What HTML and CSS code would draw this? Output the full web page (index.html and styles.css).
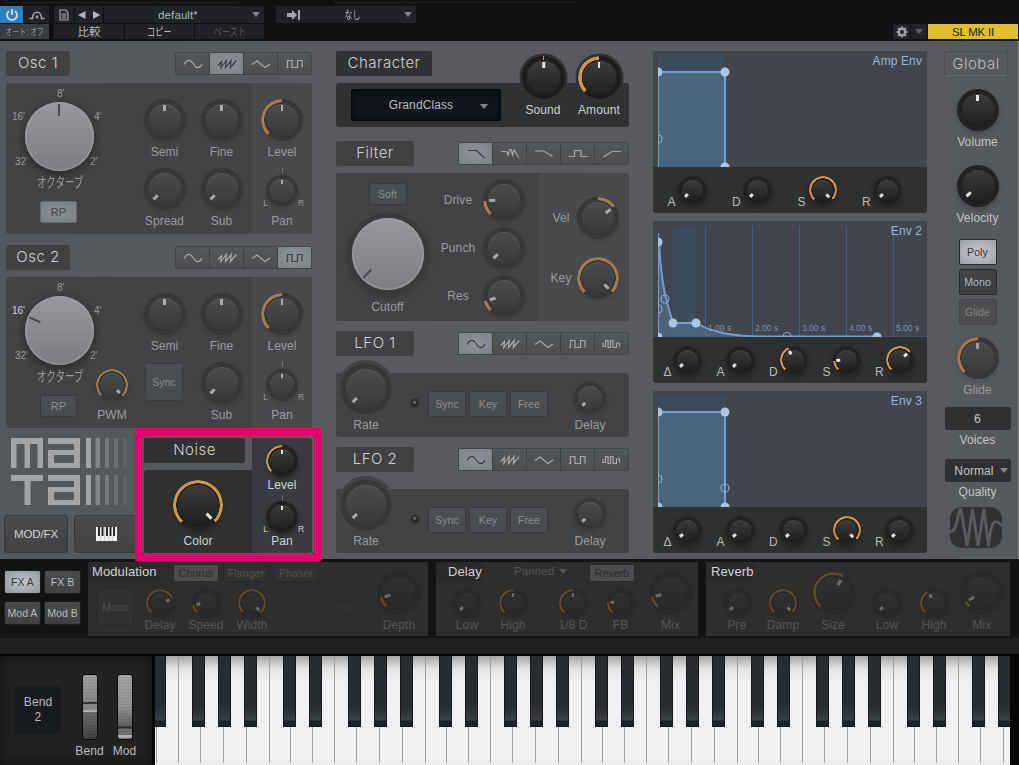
FILE: index.html
```html
<!DOCTYPE html>
<html lang="ja">
<head>
    <meta charset="UTF-8">
    <meta name="viewport" content="width=device-width, initial-scale=1.0">
    <title>Mai Tai</title>
    <link rel="stylesheet" href="styles.css">
</head>
<body>
    <svg class="symbols" aria-hidden="true">
        <symbol id="sine" viewBox="0 0 20 12"><path d="M1 6.5C3.5 2 7 .5 10 5.5S16.500 11.500 19 6"/></symbol>
        <symbol id="saw" viewBox="0 0 20 12"><path d="M.8 7.500 4.500 3.500 3.800 9.500 9.300 2.500 8.500 9.500 14.200 2.500 13.300 9.500 19.300 2.500"/></symbol>
        <symbol id="tri" viewBox="0 0 20 12"><path d="M1 6.500 6 3 14 9.500 19 6"/></symbol>
        <symbol id="square" viewBox="0 0 20 12"><path d="M1 9.500H2.500V2.500H7V9.500H12.500V2.500H17V9.500"/></symbol>
        <symbol id="pulse" viewBox="0 0 20 12"><path d="M1 5V8.500H3.500V2.500H6V9.500H8.500V2.500H11V9.500H14.500V5H17.500V8.500"/></symbol>
        <symbol id="lp24" viewBox="0 0 20 12"><path d="M2 2.500H10.500L18.500 10"/></symbol>
        <symbol id="ladder" viewBox="0 0 20 12"><path d="M1 3.500H6.500L8 7 9.500 1.500H11L12.500 7 14 2 19 10"/></symbol>
        <symbol id="lp12" viewBox="0 0 20 12"><path d="M1 3H9.500L18.500 8.500"/></symbol>
        <symbol id="bp" viewBox="0 0 20 12"><path d="M.5 8.500H6.500V2.500H13V8.500H19.500"/></symbol>
        <symbol id="hp" viewBox="0 0 20 12"><path d="M1.500 9 10 3.500H19"/></symbol>
    </svg>

    <header class="topbar">
        <div class="tabline"><i></i><i></i><i></i><i></i><i></i><i></i><i></i></div>
        <div class="topbar-row">
            <div class="host">
                <button class="hb power" aria-label="Power"><svg width="14" height="14" viewBox="0 0 14 14"><path d="M4 3A5 5 0 1 0 10 3M7 1V7"/></svg></button>
                <button class="hb auto" aria-label="Automation"><svg width="16" height="10" viewBox="0 0 16 10"><path d="M.5 8.500H3.500C3.500 0 12.500 0 12.500 8.500H15.500"/><circle cx="8" cy="7" r="1.400"/></svg></button>
                <div class="hb auto-state"><span class="narrow">オート: オフ</span></div>
            </div>
            <div class="preset">
                <button class="hb" aria-label="File"><svg width="10" height="12" viewBox="0 0 10 12"><path d="M1 1H6.500L9 3.500V11H1ZM2.500 5H7.500M2.500 7H7.500M2.500 9H7.500"/></svg></button>
                <div class="hb arrows"><svg width="23" height="8" viewBox="0 0 23 8"><path d="M7.500 0V8L0 4ZM15 0V8L22.500 4Z"/></svg></div>
                <div class="hb preset-name"><span>default*</span><i class="caret"></i></div>
                <button class="hb"><span>比較</span></button>
                <button class="hb"><span class="narrow">コピー</span></button>
                <button class="hb muted"><span class="narrow">ペースト</span></button>
            </div>
            <div class="hb sidechain"><svg width="14" height="10" viewBox="0 0 14 10"><path d="M0 3H5V0L10 5 5 10V7H0ZM11 0H13V10H11Z"/></svg><span class="narrow">なし</span><i class="caret"></i></div>
            <div class="device">
                <button class="hb" aria-label="Settings"><svg width="12" height="12" viewBox="-6 -6 12 12"><circle r="3.100"/><path d="M0-5.500V-3.500M0 5.500V3.500M-5.500 0H-3.500M5.500 0H3.500M-3.900-3.900-2.600-2.600M3.900-3.900 2.600-2.600M-3.900 3.900-2.600 2.600M3.900 3.900 2.600 2.600"/></svg></button>
                <button class="hb" aria-label="Menu"><i class="caret"></i></button>
                <div class="device-name">SL MK II</div>
            </div>
        </div>
    </header>

    <main class="synth">
        <div class="col col-osc">
            <section>
                <div class="head">
                    <h2 class="title osc-title">Osc 1</h2>
                    <div class="waves">
                        <button><svg><use href="#sine"/></svg></button>
                        <button class="on"><svg><use href="#saw"/></svg></button>
                        <button><svg><use href="#tri"/></svg></button>
                        <button><svg><use href="#square"/></svg></button>
                    </div>
                </div>
                <div class="panel osc">
                    <div class="octave">
                        <span class="feet f8">8'</span>
                        <div class="feet-col"><span class="feet">16'</span><span class="feet">32'</span></div>
                        <span class="knob light oct plain" style="--v:.5"></span>
                        <div class="feet-col"><span class="feet">4'</span><span class="feet">2'</span></div>
                        <span class="oct-label"><span>オクターブ</span></span>
                        <button class="btn rp on">RP</button>
                    </div>
                    <div class="knobs">
                        <div class="cell"><span class="knob plain" style="--v:.5"></span><label>Semi</label></div>
                        <div class="cell"><span class="knob plain" style="--v:.5"></span><label>Fine</label></div>
                        <div class="cell"><span class="knob" style="--v:0"></span><label>Spread</label></div>
                        <div class="cell"><span class="knob" style="--v:0"></span><label>Sub</label></div>
                    </div>
                    <div class="level">
                        <div class="cell"><span class="knob" style="--v:.5"></span><label>Level</label></div>
                        <div class="pan"><i></i><span>L</span><span class="knob sm plain" style="--v:.5"></span><span>R</span><label>Pan</label></div>
                    </div>
                </div>
            </section>

            <section class="osc2">
                <div class="head">
                    <h2 class="title osc-title">Osc 2</h2>
                    <div class="waves">
                        <button><svg><use href="#sine"/></svg></button>
                        <button><svg><use href="#saw"/></svg></button>
                        <button><svg><use href="#tri"/></svg></button>
                        <button class="on"><svg><use href="#square"/></svg></button>
                    </div>
                </div>
                <div class="panel osc">
                    <div class="octave">
                        <span class="feet f8">8'</span>
                        <div class="feet-col"><span class="feet sel">16'</span><span class="feet">32'</span></div>
                        <span class="knob light oct plain" style="--v:.255"></span>
                        <div class="feet-col"><span class="feet">4'</span><span class="feet">2'</span></div>
                        <span class="oct-label"><span>オクターブ</span></span>
                        <button class="btn rp">RP</button>
                        <div class="cell pwm"><span class="knob sm" style="--v:1"></span><label>PWM</label></div>
                    </div>
                    <div class="knobs">
                        <div class="cell"><span class="knob plain" style="--v:.5"></span><label>Semi</label></div>
                        <div class="cell"><span class="knob plain" style="--v:.5"></span><label>Fine</label></div>
                        <button class="btn sync">Sync</button>
                        <div class="cell"><span class="knob" style="--v:0"></span><label>Sub</label></div>
                    </div>
                    <div class="level">
                        <div class="cell"><span class="knob" style="--v:.5"></span><label>Level</label></div>
                        <div class="pan"><i></i><span>L</span><span class="knob sm plain" style="--v:.5"></span><span>R</span><label>Pan</label></div>
                    </div>
                </div>
            </section>

            <div class="bottom-left">
                <div class="brand">
                    <svg class="logo" width="117" height="67" viewBox="0 0 117 67" role="img" aria-label="mai tai">
                        <rect x="0" y="0" width="32" height="6"/><rect x="0" y="6" width="5.500" height="24"/><rect x="13.500" y="6" width="5.500" height="24"/><rect x="26.500" y="6" width="5.500" height="24"/>
                        <rect x="0" y="37" width="32" height="6"/><rect x="13.500" y="43" width="6" height="24"/>
                        <g id="bowl"><rect x="37" y="0" width="32" height="6"/><rect x="63" y="6" width="6" height="24"/><rect x="37" y="12" width="27" height="5"/><rect x="37" y="17" width="6" height="8"/><rect x="37" y="25" width="27" height="5"/></g>
                        <use href="#bowl" y="37"/>
                        <g id="bars"><rect x="75" width="5" height="30"/><rect x="84.500" width="4.500" height="30" opacity=".6"/><rect x="94" width="4" height="30" opacity=".42"/><rect x="103" width="4" height="30" opacity=".28"/><rect x="112" width="4" height="30" opacity=".16"/></g>
                        <use href="#bars" y="37"/>
                    </svg>
                    <div class="views">
                        <button class="view">MOD/FX</button>
                        <button class="view" aria-label="Keyboard"><svg width="21" height="14" viewBox="0 0 21 14"><rect width="21" height="14" fill="#f2f2f2"/><path d="M3 0V9M6.500 0V9M11 0V9M14.500 0V9M18 0V9" stroke="#26282b" stroke-width="2"/><path d="M4.700 9V14M8.700 0V14M12.700 9V14M16.300 9V14" stroke="#999" stroke-width=".5"/></svg></button>
                    </div>
                </div>
                <section class="noise bright">
                    <div class="noise-main">
                        <h2 class="title">Noise</h2>
                        <div class="panel noise-color"><span class="knob color" style="--v:1"></span><label>Color</label></div>
                    </div>
                    <div class="level">
                        <div class="cell"><span class="knob sm" style="--v:.5"></span><label>Level</label></div>
                        <div class="pan"><i></i><span>L</span><span class="knob sm plain" style="--v:.5"></span><span>R</span><label>Pan</label></div>
                    </div>
                </section>
                <div class="highlight"></div>
            </div>
        </div>

        <div class="col col-mid">
            <section class="character bright">
                <h2 class="title">Character</h2>
                <div class="panel">
                    <div class="lcd"><span>GrandClass</span><i class="caret"></i></div>
                    <div class="cell"><span class="knob char" style="--v:.505;--from:.49"></span><label>Sound</label></div>
                    <div class="cell"><span class="knob char" style="--v:.5"></span><label>Amount</label></div>
                </div>
            </section>

            <section class="filter">
                <div class="head">
                    <h2 class="title">Filter</h2>
                    <div class="waves">
                        <button class="on"><svg><use href="#lp24"/></svg></button>
                        <button><svg><use href="#ladder"/></svg></button>
                        <button><svg><use href="#lp12"/></svg></button>
                        <button><svg><use href="#bp"/></svg></button>
                        <button><svg><use href="#hp"/></svg></button>
                    </div>
                </div>
                <div class="panel">
                    <div class="cutoff">
                        <button class="btn">Soft</button>
                        <span class="knob light cut plain" style="--v:0"></span>
                        <label>Cutoff</label>
                    </div>
                    <div class="rows">
                        <label>Drive</label><span class="knob" style="--v:.155"></span>
                        <label>Punch</label><span class="knob" style="--v:0"></span>
                        <label>Res</label><span class="knob" style="--v:.11"></span>
                    </div>
                    <div class="rows track">
                        <label>Vel</label><span class="knob" style="--v:.7;--from:.5"></span>
                        <label>Key</label><span class="knob" style="--v:1"></span>
                    </div>
                </div>
            </section>

            <section class="lfo">
                <div class="head">
                    <h2 class="title">LFO 1</h2>
                    <div class="waves">
                        <button class="on"><svg><use href="#sine"/></svg></button>
                        <button><svg><use href="#saw"/></svg></button>
                        <button><svg><use href="#tri"/></svg></button>
                        <button><svg><use href="#square"/></svg></button>
                        <button><svg><use href="#pulse"/></svg></button>
                    </div>
                </div>
                <div class="panel">
                    <div class="cell rate"><span class="knob big" style="--v:0"></span><label>Rate</label></div>
                    <i class="led"></i>
                    <button class="btn">Sync</button><button class="btn">Key</button><button class="btn">Free</button>
                    <div class="cell delay"><span class="knob sm" style="--v:0"></span><label>Delay</label></div>
                </div>
            </section>

            <section class="lfo">
                <div class="head">
                    <h2 class="title">LFO 2</h2>
                    <div class="waves">
                        <button class="on"><svg><use href="#sine"/></svg></button>
                        <button><svg><use href="#saw"/></svg></button>
                        <button><svg><use href="#tri"/></svg></button>
                        <button><svg><use href="#square"/></svg></button>
                        <button><svg><use href="#pulse"/></svg></button>
                    </div>
                </div>
                <div class="panel">
                    <div class="cell rate"><span class="knob big" style="--v:0"></span><label>Rate</label></div>
                    <i class="led"></i>
                    <button class="btn">Sync</button><button class="btn">Key</button><button class="btn">Free</button>
                    <div class="cell delay"><span class="knob sm" style="--v:0"></span><label>Delay</label></div>
                </div>
            </section>
        </div>

        <div class="col col-env bright">
            <section class="env">
                <svg class="graph" width="274" height="116" viewBox="0 0 274 116">
                    <rect class="span" x="5" y="5" width="67" height="111"/>
                    <path class="area" d="M5 116V21H72V116"/>
                    <path class="edge" d="M5.500 116V21"/><path class="line" d="M5 21H72V116"/>
                    <g class="dots"><path d="M5 16.500A4.500 4.500 0 0 1 5 25.500Z"/><circle cx="72" cy="21" r="4.500"/><circle cx="72" cy="116" r="4.500"/></g>
                    <path class="ring" d="M5 84A4 4 0 0 1 5 92"/>
                    <text class="name" x="269" y="14">Amp Env</text>
                </svg>
                <div class="env-knobs four">
                    <div><label>A</label><span class="knob xs" style="--v:0"></span></div>
                    <div><label>D</label><span class="knob xs" style="--v:0"></span></div>
                    <div><label>S</label><span class="knob xs" style="--v:1"></span></div>
                    <div><label>R</label><span class="knob xs" style="--v:0"></span></div>
                </div>
            </section>

            <section class="env">
                <svg class="graph" width="274" height="116" viewBox="0 0 274 116">
                    <rect class="span" x="20" y="5" width="23" height="111"/>
                    <path class="grid" d="M52.500 5V116M99.500 5V116M146.500 5V116M193.500 5V116M240.500 5V116"/>
                    <path class="area" d="M5 116V21C8 62 13 80 20 102H43C62 113 84 115 110 115.500H274V116Z"/>
                    <path class="edge" d="M5.500 116V12"/>
                    <path class="line" d="M6 21C8 62 13 80 20 102H43C62 113 84 115 110 115.500H225"/>
                    <g class="dots"><path d="M5 16.500A4.500 4.500 0 0 1 5 25.500Z"/><circle cx="20" cy="102" r="4.500"/><circle cx="43" cy="102" r="4.500"/><circle cx="224" cy="116" r="4.500"/><path d="M5 111.500A4.500 4.500 0 0 1 9.500 116H5Z"/></g>
                    <g class="ring"><circle cx="12" cy="78" r="4"/><path d="M5 84A4 4 0 0 1 5 92"/><circle cx="134" cy="115.500" r="4"/></g>
                    <g class="secs"><text x="55" y="110">1.00 s</text><text x="102" y="110">2.00 s</text><text x="149" y="110">3.00 s</text><text x="196" y="110">4.00 s</text><text x="243" y="110">5.00 s</text></g>
                    <text class="name" x="269" y="14">Env 2</text>
                </svg>
                <div class="env-knobs">
                    <div><label>Δ</label><span class="knob xs" style="--v:0"></span></div>
                    <div><label>A</label><span class="knob xs" style="--v:0"></span></div>
                    <div><label>D</label><span class="knob xs" style="--v:.41"></span></div>
                    <div><label>S</label><span class="knob xs" style="--v:.15"></span></div>
                    <div><label>R</label><span class="knob xs" style="--v:.685"></span></div>
                </div>
            </section>

            <section class="env">
                <svg class="graph" width="274" height="116" viewBox="0 0 274 116">
                    <rect class="span" x="5" y="5" width="67" height="111"/>
                    <path class="area" d="M5 116V21H72V116"/>
                    <path class="edge" d="M5.500 116V21"/><path class="line" d="M5 21H72V116"/>
                    <g class="dots"><path d="M5 16.500A4.500 4.500 0 0 1 5 25.500Z"/><circle cx="72" cy="21" r="4.500"/><circle cx="72" cy="116" r="4.500"/><path d="M5 111.500A4.500 4.500 0 0 1 9.500 116H5Z"/></g>
                    <g class="ring"><path d="M5 84A4 4 0 0 1 5 92"/><circle cx="72" cy="97" r="4"/></g>
                    <text class="name" x="269" y="14">Env 3</text>
                </svg>
                <div class="env-knobs">
                    <div><label>Δ</label><span class="knob xs" style="--v:0"></span></div>
                    <div><label>A</label><span class="knob xs" style="--v:0"></span></div>
                    <div><label>D</label><span class="knob xs" style="--v:0"></span></div>
                    <div><label>S</label><span class="knob xs" style="--v:1"></span></div>
                    <div><label>R</label><span class="knob xs" style="--v:0"></span></div>
                </div>
            </section>
        </div>

        <div class="col col-global bright">
            <h2 class="global-title">Global</h2>
            <div class="cell"><span class="knob plain" style="--v:.5"></span><label>Volume</label></div>
            <div class="cell"><span class="knob plain" style="--v:0"></span><label>Velocity</label></div>
            <div class="modes">
                <button class="btn on">Poly</button>
                <button class="btn">Mono</button>
                <button class="btn off">Glide</button>
            </div>
            <div class="cell glide"><span class="knob" style="--v:.5"></span><label>Glide</label></div>
            <div class="field">6</div>
            <label>Voices</label>
            <div class="field"><span>Normal</span><i class="caret"></i></div>
            <label>Quality</label>
            <svg class="badge" width="52" height="41" viewBox="0 0 52 41">
                <rect width="52" height="41" rx="12"/>
                <path d="M0 25C5 24 6 19 8 10 10 0 11 0 12 8L17 39 22.500 2 28 39 34 2 38.500 39C40 28 41 16 45 15 49 14 50 17 52 19"/>
            </svg>
        </div>
    </main>

    <section class="fx">
        <div class="slots">
            <button class="btn on">FX A</button><button class="btn">FX B</button>
            <button class="btn">Mod A</button><button class="btn">Mod B</button>
        </div>
        <div class="fx-panel modulation">
            <div class="fx-head"><h3>Modulation</h3><button class="btn on">Chorus</button><button class="btn">Flanger</button><button class="btn">Phaser</button></div>
            <div class="fx-body">
                <button class="btn">Mono</button>
                <div class="cell"><span class="knob xs" style="--v:.76"></span><label>Delay</label></div>
                <div class="cell"><span class="knob xs" style="--v:.13"></span><label>Speed</label></div>
                <div class="cell"><span class="knob xs" style="--v:1"></span><label>Width</label></div>
                <button class="btn ghost">Sync</button>
                <div class="cell"><span class="knob main" style="--v:.11"></span><label>Depth</label></div>
            </div>
        </div>
        <div class="fx-panel echo">
            <div class="fx-head"><h3>Delay</h3><div class="panned">Panned<i class="caret"></i></div><button class="btn on">Reverb</button></div>
            <div class="fx-body">
                <div class="cell"><span class="knob xs" style="--v:0"></span><label>Low</label></div>
                <div class="cell"><span class="knob xs" style="--v:.5"></span><label>High</label></div>
                <i></i>
                <div class="cell"><span class="knob xs" style="--v:.5"></span><label>1/8 D</label></div>
                <div class="cell"><span class="knob xs" style="--v:.18"></span><label>FB</label></div>
                <div class="cell"><span class="knob main" style="--v:.12"></span><label>Mix</label></div>
            </div>
        </div>
        <div class="fx-panel reverb">
            <div class="fx-head"><h3>Reverb</h3></div>
            <div class="fx-body">
                <div class="cell"><span class="knob xs" style="--v:0"></span><label>Pre</label></div>
                <div class="cell"><span class="knob xs" style="--v:1"></span><label>Damp</label></div>
                <div class="cell"><span class="knob main" style="--v:.61"></span><label>Size</label></div>
                <div class="cell"><span class="knob xs" style="--v:0"></span><label>Low</label></div>
                <div class="cell"><span class="knob xs" style="--v:.39"></span><label>High</label></div>
                <div class="cell"><span class="knob main" style="--v:.06"></span><label>Mix</label></div>
            </div>
        </div>
    </section>

    <footer class="play">
        <div class="wheels">
            <div class="range"><span>Bend</span><span>2</span></div>
            <div class="wheel"><i class="bend"></i><label>Bend</label></div>
            <div class="wheel"><i class="mod"></i><label>Mod</label></div>
        </div>
        <div class="keys" id="keys"></div>
    </footer>

    <script>
        // White keys from E upwards; black keys sit on a 13px semitone grid.
        const keys = document.getElementById('keys');
        const whites = [22.5, 22.5, 23.5, 22.5, 21.5, 22, 21.5];
        const blacks = [37, 63, 89, 128, 154];

        function add(type, prop, value) {
            const key = document.createElement('i');
            key.className = type;
            key.style[prop] = value + 'px';
            keys.appendChild(key);
        }

        add('white', 'width', 2);
        add('white', 'width', 21.5);
        for (let i = 0; i < 38; i++) {
            add('white', 'width', whites[i % 7]);
        }

        add('black', 'left', -2);
        for (let octave = 0; octave < 6; octave++) {
            blacks.forEach(x => {
                if (x + octave * 156 < 850) {
                    add('black', 'left', x + octave * 156);
                }
            });
        }
    </script>
</body>
</html>
```
FILE: styles.css
```css
* {
    box-sizing: border-box;
}

body {
    margin: 0;
    width: 1019px;
    height: 765px;
    overflow: hidden;
    background: #141414;
    font-family: "Liberation Sans", "Noto Sans CJK JP", sans-serif;
    font-size: 12px;
    line-height: 14px;
    letter-spacing: .1px;
    color: #9b9b9d;
}

button {
    margin: 0;
    padding: 0;
    border: 0;
    font: inherit;
    letter-spacing: inherit;
    color: inherit;
}

h2, h3 {
    margin: 0;
    font-weight: 400;
}

i {
    display: block;
    font-style: normal;
}

label {
    white-space: nowrap;
}

.symbols {
    position: absolute;
    width: 0;
    height: 0;
}

.caret {
    border: 4px solid transparent;
    border-top: 5px solid #85878a;
    border-bottom: 0;
}

.narrow {
    display: inline-block;
    white-space: nowrap;
    transform: scaleX(.7);
}

/* top bar */

.topbar {
    height: 41px;
    background: #0f1012;
    font-size: 11.5px;
}

.tabline {
    display: grid;
    grid-template-columns: 63px 88px 81px 98px 69px 79px 94px;
    height: 6px;
    padding-left: 5px;
}

.tabline i {
    height: 3px;
    border-bottom: 1px solid #1f2022;
    border-left: 1px solid #1f2022;
}

.tabline i:nth-child(4) {
    border-bottom-color: transparent;
}

.topbar-row {
    display: flex;
    align-items: flex-start;
    height: 34px;
}

.hb {
    display: flex;
    align-items: center;
    justify-content: center;
    background: #202225;
    color: #b5b7ba;
}

.host {
    display: grid;
    grid-template: 17px 15px / 23px 25px;
    gap: 1px;
}

.power {
    background: #2d80bd;
}

.power svg, .auto svg {
    fill: none;
    stroke: #c8d6e0;
    stroke-width: 2;
}

.auto svg {
    stroke: #a3a5a8;
    stroke-width: 1.5;
}

.auto circle {
    fill: #a3a5a8;
    stroke: none;
}

.auto-state {
    grid-column: span 2;
    background: #383d3f;
    color: #929597;
}

.auto-state .narrow {
    transform: scaleX(.72);
    font-size: 9.5px;
}

.preset {
    display: grid;
    grid-template: 17px 15px / 20px 28px 20px 69px 69px;
    gap: 1px;
    margin-left: 5px;
}

.preset > :nth-child(3) {
    grid-column: 3 / span 3;
}

.preset > :nth-child(4) {
    grid-column: 1 / span 3;
}

.preset svg {
    fill: none;
    stroke: #a3a5a8;
    stroke-width: 1.2;
}

.preset .arrows svg {
    fill: #b0b2b4;
    stroke: none;
}

.preset-name {
    position: relative;
    padding-right: 12px;
}

.preset-name .caret {
    position: absolute;
    right: 4px;
}

.muted {
    color: #54565a;
}

.sidechain {
    width: 140px;
    height: 17px;
    margin-left: 12px;
    padding: 0 4px 0 11px;
    justify-content: space-between;
}

.sidechain svg {
    fill: #a3a5a8;
}

.device {
    display: flex;
    gap: 1px;
    height: 15px;
    margin: 18px 0 0 auto;
    padding-right: 1px;
}

.device .hb {
    width: 16px;
}

.device .hb:first-child {
    width: 17px;
}

.device svg {
    fill: none;
    stroke: #a0a2a5;
    stroke-width: 2.2;
}

.device .caret {
    border-top-color: #5e6165;
}

.device-name {
    width: 90px;
    background: #dfbe2f;
    color: #2a250f;
    line-height: 16px;
    text-align: center;
    letter-spacing: -.2px;
}

/* knobs: the box is the cap, the ring is drawn around it */

.knob {
    --d: 34px;
    --w: 4px;
    --arc: 3px;
    --from: 0;
    --tick: 6px;
    --gap: 2px;
    position: relative;
    flex: none;
    display: block;
    width: var(--d);
    height: var(--d);
    margin: var(--w);
    border-radius: 50%;
    background: linear-gradient(#4a4b4d, #38393b);
    box-shadow: inset 0 0 0 1px #303133, inset 0 1px 1px 1px #5a5b5d, 0 0 0 var(--w) #373739, 0 2px 3px 5px #0001;
}

.knob::before {
    content: "";
    position: absolute;
    inset: calc(var(--w) * -1);
    border-radius: 50%;
    background: conic-gradient(from calc(225deg + var(--from) * 270deg), var(--arc-color, #a67c4c) calc((var(--v) - var(--from)) * 270deg), transparent 0);
    -webkit-mask: radial-gradient(closest-side, transparent calc(100% - var(--arc) - .5px), #000 calc(100% - var(--arc)));
    mask: radial-gradient(closest-side, transparent calc(100% - var(--arc) - .5px), #000 calc(100% - var(--arc)));
}

.knob.plain::before {
    display: none;
}

.knob::after {
    content: "";
    position: absolute;
    left: calc(50% - 1.25px);
    top: var(--gap);
    width: 2.5px;
    height: var(--tick);
    background: #aaaaab;
    transform-origin: 50% calc(var(--d) / 2 - var(--gap));
    transform: rotate(calc((var(--v) - .5) * 270deg));
}

.knob.sm {
    --d: 26px;
    --w: 3px;
    --arc: 2px;
    --tick: 4px;
}

.knob.xs {
    --d: 23px;
    --w: 2.5px;
    --arc: 2px;
    --tick: 3.5px;
    --gap: 1.5px;
}

.knob.big {
    --d: 42px;
    --w: 4.5px;
    --tick: 6px;
    box-shadow: inset 0 0 0 1px #303133, inset 0 1px 1px 1px #5a5b5d, 0 0 0 var(--w) #373739, 0 0 0 8px #434345;
}

.knob.main {
    --d: 34px;
    --w: 3.5px;
    --arc: 2.5px;
}

.knob.light {
    background: linear-gradient(#98989c, #7d7d81);
    box-shadow: inset 0 0 2px 1px #a2a2a5, 0 0 0 var(--w) #3a3a3c, 0 3px 8px 2px #0005;
}

.knob.light::after {
    width: 2px;
    background: #4a4a4c;
}

.knob.oct {
    --d: 69px;
    --w: 0px;
    --tick: 12px;
}

.knob.cut {
    --d: 72px;
    --w: 5px;
    --tick: 12px;
}

.bright .knob {
    background: linear-gradient(#3b3c3c, #1e1f1f);
    box-shadow: inset 0 0 0 1px #191a1a, inset 0 1px 1px 1px #464747, 0 0 0 var(--w) #212222, 0 3px 5px 4px #0003;
    --arc-color: #d39549;
}

.bright .knob::after {
    background: #e2e2e2;
}

.bright .knob.char {
    --d: 35px;
    --w: 4px;
    --arc: 3.5px;
    box-shadow: inset 0 0 0 1px #191a1a, inset 0 1px 1px 1px #464747, 0 0 0 var(--w) #1c1c1c, 0 0 0 6.5px #303132;
}

.bright .knob.color {
    --d: 42px;
    --w: 4px;
    --tick: 7px;
}

.fx-panel .knob {
    background: linear-gradient(#313131, #292929);
    box-shadow: inset 0 0 0 1px #272727, inset 0 1px 1px 1px #363636, 0 0 0 var(--w) #2b2b2b, 0 0 0 calc(var(--w) + 1px) #282828;
    --arc-color: #5d4831;
}

.fx-panel .knob::after {
    background: #6b6b6b;
}

.cell {
    display: flex;
    flex-direction: column;
    align-items: center;
}

/* main area */

.synth {
    display: grid;
    grid-template-columns: 306px 293px 274px 67px;
    column-gap: 24px;
    height: 518px;
    padding: 10px 0 0 6px;
    background: linear-gradient(90deg, #54585a, #585a5d 30%, #595b5e 90%, #55585c);
    border-right: 1px solid #7c8084;
}

.head {
    display: flex;
    align-items: center;
    justify-content: space-between;
    height: 25px;
    margin-bottom: 7px;
}

.title {
    width: 78px;
    height: 25px;
    border-radius: 2px;
    background: #414143;
    color: #d0d0d1;
    font: 300 15px/24px Inter, "Liberation Sans", sans-serif;
    letter-spacing: .5px;
    text-align: center;
}

.osc-title {
    width: 64px;
}

.panel {
    display: flex;
    border-radius: 3px;
    background: #434345;
}

.waves {
    display: flex;
    height: 23px;
    border: 1px solid #434547;
    border-radius: 2px;
}

.waves button {
    display: flex;
    align-items: center;
    justify-content: center;
    width: 34px;
    background: linear-gradient(#55585a, #4c4e50);
    border-right: 1px solid #3f4143;
}

.waves button:last-child {
    width: 33px;
    border-right: 0;
}

.waves svg {
    width: 20px;
    height: 12px;
    fill: none;
    stroke: #a8aaac;
    stroke-width: 1.2;
}

.waves .on {
    background: radial-gradient(#8e929a, #7d8188);
}

.waves .on svg {
    stroke: #3c3e42;
}

.btn {
    display: block;
    border: 1px solid #3a3b3c;
    border-radius: 2px;
    background: linear-gradient(#4d5052, #484b4d);
    color: #8b8d8f;
    font-size: 10.5px;
    text-align: center;
}

.btn.on {
    background: radial-gradient(#8d9097, #7b7e84);
    border-color: #66696d;
    color: #434548;
}

.osc {
    height: 151px;
}

.octave {
    display: grid;
    grid-template: 17px 69px 28px auto / 19px 69px 42px;
    width: 130px;
    padding-top: 2px;
}

.feet-col {
    display: flex;
    flex-direction: column;
    justify-content: space-between;
    padding: 8px 0 2px;
}

.feet-col:nth-child(2) {
    align-items: flex-end;
}

.feet {
    font-size: 10px;
    letter-spacing: 0;
}

.feet-col:nth-child(4) .feet:last-child {
    margin-left: -4px;
}

.feet-col:nth-child(2) .feet:last-child {
    margin-right: -3px;
}

.f8 {
    grid-column: 1 / -1;
    padding: 2px 0 0 51px;
}

.sel {
    color: #d5d5d6;
}

.oct-label {
    grid-column: 1 / -1;
    grid-row: 3;
    display: flex;
    justify-content: center;
    width: 108px;
    padding-top: 4px;
    font-size: 14px;
    letter-spacing: 0;
}

.oct-label span {
    transform: scaleX(.68);
}

.rp {
    grid-column: 2;
    grid-row: 4;
    width: 37px;
    height: 22px;
    margin: 2px 0 0 15px;
    font-size: 11px;
}

.pwm {
    grid-column: 3;
    grid-row: 3 / span 2;
    align-self: start;
    width: 50px;
    margin: 4px 0 0 -7px;
}

.knobs {
    display: grid;
    grid-template-columns: 57px 57px;
    grid-auto-rows: 61px;
    gap: 8px 0;
    width: 116px;
    padding-top: 16px;
    align-content: start;
}

.cell label {
    margin-top: 4px;
}

.sync {
    width: 38px;
    height: 38px;
    margin: 1px 0 0 9px;
}

.level {
    width: 60px;
    padding-top: 16px;
    border-radius: 0 3px 3px 0;
    background: #49494c;
}

.osc .pwm label {
    margin-top: 7px;
}

.pan {
    display: grid;
    grid-template-columns: 14px 32px 14px;
    justify-items: center;
    margin-top: 8px;
}

.pan > i {
    grid-column: 1 / -1;
    width: 1px;
    height: 6px;
    margin-bottom: 2px;
    background: #707173;
}

.pan > span:not(.knob) {
    align-self: end;
    font-size: 8.5px;
    line-height: 8px;
}

.pan > span:nth-child(2) {
    justify-self: end;
    margin-right: -2px;
}

.pan > span:nth-child(4) {
    justify-self: start;
}

.pan label {
    grid-column: 1 / -1;
    margin-top: 7px;
}

.osc2 {
    margin-top: 11px;
}

/* logo, view switches and noise */

.bottom-left {
    position: relative;
    display: flex;
    margin-top: 10px;
}

.brand {
    width: 138px;
    margin-left: -2px;
}

.logo {
    display: block;
    margin-left: 7px;
    fill: #a2a4a5;
}

.views {
    display: flex;
    gap: 6px;
    margin-top: 10px;
}

.view {
    display: flex;
    align-items: center;
    justify-content: center;
    width: 64px;
    height: 38px;
    border: 1px solid #36383a;
    border-radius: 3px;
    background: linear-gradient(#494b4d, #404244);
    color: #d6d6d7;
    font-size: 11.5px;
    letter-spacing: -.1px;
}

.noise {
    display: flex;
    height: 115px;
    margin-left: 2px;
    color: #d2d2d3;
}

.noise-main {
    width: 108px;
}

.noise .title {
    width: 101px;
    background: #303132;
}

.noise-color {
    flex-direction: column;
    align-items: center;
    height: 83px;
    margin-top: 7px;
    padding-top: 10px;
    border-radius: 3px 0 0 3px;
    background: #303132;
}

.noise-color label {
    margin-top: 4px;
}

.noise .level {
    padding-top: 7px;
    background: #3a3b3e;
}

.noise .level .cell label {
    margin-top: 1px;
}

.noise .pan {
    margin-top: 3px;
}

.noise .pan label {
    margin-top: 1px;
}

.noise .pan > i {
    margin-bottom: 0;
}

.highlight {
    position: absolute;
    left: 129px;
    top: -10px;
    width: 186px;
    height: 133px;
    border: 7px solid #e5006e;
    z-index: 2;
}

/* character */

.character {
    color: #d0d0d1;
}

.character .title {
    width: 96px;
    margin-bottom: 7px;
    background: #303132;
}

.character .panel {
    height: 44px;
    padding: 0 0 10px 15px;
    align-items: flex-end;
    background: #303132;
}

.character .cell {
    width: 56px;
}

.lcd {
    display: flex;
    align-items: center;
    justify-content: center;
    position: relative;
    width: 150px;
    height: 32px;
    margin: 0 14px -4px 0;
    padding-right: 10px;
    border: 1px solid #050607;
    border-radius: 2px;
    background: #10141c;
    box-shadow: inset 0 0 6px #07090d;
    color: #bcbdbf;
}

.lcd .caret {
    position: absolute;
    right: 12px;
    top: 14px;
}

/* filter */

.filter {
    margin-top: 14px;
}

.filter .panel {
    height: 148px;
}

.cutoff {
    display: flex;
    flex-direction: column;
    align-items: center;
    width: 103px;
    padding-top: 10px;
}

.cutoff .btn {
    width: 38px;
    height: 22px;
    margin-bottom: 8px;
}

.cutoff label {
    margin-top: 5px;
}

.rows {
    display: grid;
    grid-template-columns: 38px 54px;
    grid-auto-rows: 48px;
    place-items: center;
    align-content: start;
    width: 100px;
    padding-top: 3px;
}

.track {
    grid-template-columns: 44px 30px;
    grid-auto-rows: 60px;
    width: 90px;
    padding-top: 15px;
    border-radius: 0 3px 3px 0;
    background: #4a4a4d;
}

/* lfo */

.lfo {
    margin-top: 10px;
}

.lfo .head {
    margin-bottom: 17px;
}

.lfo .panel {
    height: 64px;
    padding-bottom: 5px;
    align-items: flex-end;
}

.rate {
    width: 60px;
}

.led {
    width: 10px;
    height: 10px;
    margin: 0 8px 24px 14px;
    border: 1px solid #38393a;
    border-radius: 50%;
    background: radial-gradient(circle at 45% 40%, #6d6e70 1px, #2b2c2d 2px);
}

.lfo .btn {
    width: 38px;
    height: 26px;
    margin: 0 3px 15px 0;
}

.delay {
    width: 50px;
    margin: 0 14px 0 auto;
}

/* envelopes */

.env {
    height: 162px;
    margin-bottom: 8px;
    border-radius: 3px;
    overflow: hidden;
    background: #2f3030;
}

.graph {
    display: block;
    background: #40454e;
}

.span {
    fill: #3b4c5c;
}

.area {
    fill: #567495;
    fill-opacity: .6;
}

.line, .edge, .grid {
    fill: none;
    stroke: #6f9fd6;
    stroke-width: 2;
}

.edge {
    stroke-width: 1;
}

.grid {
    stroke: #3b6088;
    stroke-width: 1;
}

.dots {
    fill: #adc5e2;
}

.ring {
    fill: none;
    stroke: #8fa9c4;
    stroke-width: 1.2;
}

.name {
    fill: #98b6d8;
    text-anchor: end;
}

.secs {
    fill: #7d95b0;
    font-size: 8.5px;
    letter-spacing: 0;
}

.env-knobs {
    display: grid;
    grid-template-columns: repeat(5, 53px);
    padding: 9px 0 0 8px;
    color: #b9baba;
}

.env-knobs > div {
    display: flex;
    justify-content: flex-end;
    padding-right: 12.5px;
}

.env-knobs label {
    width: 12px;
    margin-top: 19px;
    text-align: center;
}

.four {
    grid-template-columns: repeat(4, 65px);
    padding-left: 1px;
}

.four label {
    margin-right: 1px;
}

/* global */

.col-global {
    display: flex;
    flex-direction: column;
    align-items: center;
    width: 67px;
    margin-left: -7px;
    color: #c5c6c7;
}

.global-title {
    align-self: flex-start;
    width: 64px;
    height: 25px;
    margin-bottom: 13px;
    border: 1px solid #4b4d4f;
    border-bottom-color: #66696b;
    border-radius: 2px;
    color: #bcbdbe;
    font: 300 15px/24px Inter, "Liberation Sans", sans-serif;
    letter-spacing: .5px;
    text-align: center;
}

.col-global .cell {
    margin-bottom: 16px;
}

.modes {
    display: grid;
    gap: 4px;
    margin-top: -2px;
}

.modes .btn {
    width: 38px;
    height: 26px;
    border-color: #292a2b;
    background: linear-gradient(#424446, #3a3c3e);
    color: #b9babb;
}

.modes .on {
    background: radial-gradient(#c4c7cf, #9fa2aa);
    color: #2e3033;
}

.modes .off {
    background: #4d4f51;
    border-color: #434547;
    color: #818385;
}

.col-global .glide {
    margin: 12px 0 10px;
    color: #9b9c9e;
}

.bright .glide .knob {
    background: linear-gradient(#4a4b4d, #38393b);
    box-shadow: inset 0 0 0 1px #303133, inset 0 1px 1px 1px #5a5b5d, 0 0 0 var(--w) #373739, 0 2px 3px 5px #0001;
    --arc-color: #a67c4c;
}

.glide .knob::after {
    background: #9d9d9e;
}

.field {
    display: flex;
    align-items: center;
    justify-content: center;
    gap: 6px;
    width: 66px;
    height: 23px;
    border-radius: 2px;
    background: #2e2f30;
}

.field + label {
    margin: 3px 0 12px;
}

.field .caret {
    margin-right: -7px;
}

.badge {
    flex: none;
    margin: -4px 3px 0 0;
}

.badge rect {
    fill: #303133;
}

.badge path {
    fill: none;
    stroke: #595b5e;
    stroke-width: 2.8;
}

/* effects */

.fx {
    display: flex;
    height: 97px;
    padding-top: 3px;
    background: linear-gradient(#131313 79px, #202020 0 95px, #050505 0);
}

.slots {
    display: grid;
    grid-template-columns: 37px 37px;
    grid-auto-rows: 24px;
    gap: 7px 3px;
    width: 88px;
    padding: 8px 0 0 4px;
    align-content: start;
}

.slots .btn {
    border-color: #1b1c1d;
    background: linear-gradient(#494b4d, #3e4042);
    color: #bcbdbe;
    letter-spacing: 0;
}

.slots .btn.on {
    background: radial-gradient(#c4c7cf, #90949b);
    color: #34363a;
}

.fx-panel {
    height: 74px;
    margin-right: 8px;
    background: #2e2e2e;
    color: #565656;
}

.modulation {
    width: 340px;
}

.echo {
    width: 262px;
}

.reverb {
    width: 304px;
}

.fx-head {
    display: flex;
    align-items: flex-start;
    height: 20px;
}

.fx-head h3 {
    height: 19px;
    padding-left: 4px;
    background: #2a2a2a;
    color: #d3d3d3;
    font-size: 13px;
    line-height: 20px;
    letter-spacing: .1px;
}

.modulation h3 {
    width: 73px;
    margin-right: 12px;
}

.fx-panel .btn {
    border-color: #282828;
    background: #303132;
    color: #505051;
}

.fx-head .btn {
    width: 46px;
    height: 18px;
    margin: 2px 4px 0 0;
}

.fx-panel .btn.on {
    background: #4b4c4e;
    color: #2b2c2d;
}

.echo h3 {
    width: 48px;
    margin-right: 22px;
    padding-left: 12px;
}

.reverb h3 {
    padding-left: 5px;
}

.panned {
    display: flex;
    align-items: center;
    gap: 5px;
    height: 18px;
    width: 60px;
    padding-left: 8px;
    margin-right: 23px;
    font-size: 11.5px;
}

.panned .caret {
    border-top-color: #565656;
}

.fx-body {
    display: grid;
    grid-template-rows: 50px;
    align-items: end;
}

.fx-body .cell label {
    margin-top: 1px;
}

.fx-body .knob.main + label {
    margin-top: 5px;
}

.modulation .fx-body {
    grid-template-columns: 40px 46px 46px 46px 53px 36px 65px;
    padding-left: 9px;
}

.modulation .fx-body .btn {
    width: 37px;
    height: 37px;
    margin-bottom: 7px;
}

.modulation .fx-body .ghost {
    grid-column: 6;
    background: #2d2d2d;
    border-color: #2c2c2c;
    color: #353535;
}

.modulation .fx-body .cell:last-child {
    padding-left: 5px;
}

.echo .fx-body {
    grid-template-columns: 46px 46px 14px 46px 49px 51px;
    padding-left: 8px;
}

.reverb .fx-body {
    grid-template-columns: 46px 46px 54px 54px 40px 56px;
    padding-left: 8px;
}

/* wheels and keyboard */

.play {
    display: flex;
    height: 109px;
    background: #060606;
}

.wheels {
    display: flex;
    align-items: flex-start;
    width: 152px;
    padding: 18px 0 0 15px;
    background: #222;
    box-shadow: inset 0 0 14px #111;
    color: #bcbcbd;
}

.range {
    display: flex;
    flex-direction: column;
    align-items: center;
    justify-content: center;
    width: 46px;
    height: 48px;
    margin: 12px 11px 0 0;
    border-radius: 3px;
    background: #171a1f;
    line-height: 15px;
}

.wheel {
    display: flex;
    flex-direction: column;
    align-items: center;
    width: 35px;
}

.wheel i {
    width: 16px;
    height: 66px;
    margin-bottom: 4px;
    border: 1px solid #090909;
    border-radius: 3px;
    background: repeating-linear-gradient(#0000 0 2px, #0001 2px 3px), linear-gradient(#a0a0a0, #868686 42%, #333 43% 45%, #888 46% 54%, #b4b4b4 55% 57%, #6c6c6c 58%, #404040);
}

.wheel .mod {
    background: repeating-linear-gradient(#0000 0 2px, #0001 2px 3px), linear-gradient(#a4a4a4, #929292 50%, #5e5e5e 80%, #2a2a2a 81% 83%, #707070 84% 93%, #b4b4b4 94% 97%, #666);
}

.keys {
    position: relative;
    display: flex;
    width: 855px;
    margin-left: 3px;
    overflow: hidden;
    background: #ececed;
}

.white {
    flex: none;
    height: 107px;
    background: linear-gradient(#a5a5a6, #e4e4e5 13px, #f0f0f2 26px);
    border-right: 1px solid #a0a0a2;
}

.black {
    position: absolute;
    top: 0;
    width: 13px;
    height: 71px;
    border: 1px solid #171a1d;
    border-top: 0;
    background: linear-gradient(#262c30 50px, #394147 64px, #1e2225 65px);
}
```
